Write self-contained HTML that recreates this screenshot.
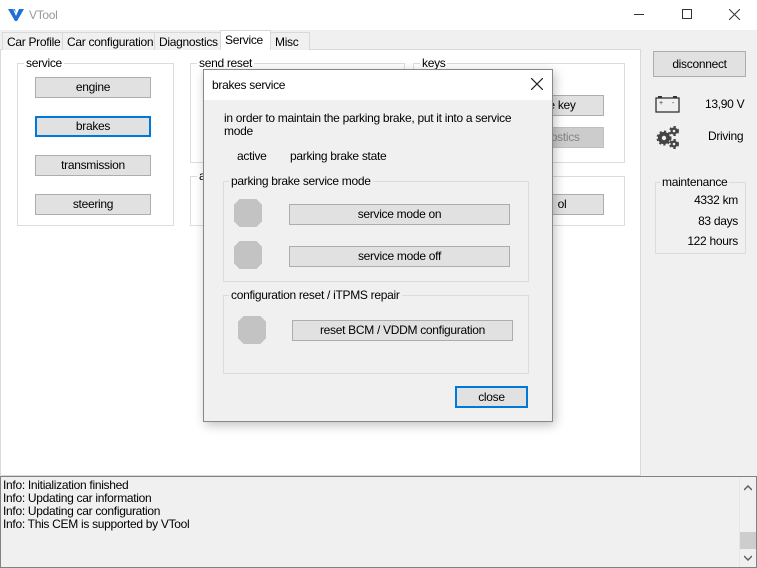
<!DOCTYPE html>
<html><head><style>
*{box-sizing:border-box;margin:0;padding:0}
body{width:757px;height:568px;background:#f0f0f0;font-family:"Liberation Sans",sans-serif;font-size:12px;color:#000;position:relative;overflow:hidden;letter-spacing:-0.3px}
.a{position:absolute;white-space:nowrap}
.btn{position:absolute;background:#e1e1e1;border:1px solid #adadad;text-align:center;line-height:19px;white-space:nowrap}
.grp{position:absolute;border:1px solid #dcdcdc}
.lg{position:absolute;top:-8px;left:6px;padding:0 2px;line-height:14px;white-space:nowrap}
.tab{position:absolute;top:32px;height:18px;border:1px solid #d9d9d9;border-bottom:none;background:#f0f0f0;line-height:18px;padding-left:4px;white-space:nowrap;overflow:hidden}
.oct{position:absolute;width:28px;height:28px;background:#c3c3c3;clip-path:polygon(20% 0,80% 0,100% 20%,100% 80%,80% 100%,20% 100%,0 80%,0 20%)}
</style></head><body>
<div class="a" style="left:0;top:0;width:757px;height:30px;background:#fff"></div>
<svg class="a" style="left:8px;top:8px" width="16" height="14" viewBox="0 0 16 14"><path d="M0 1h5l3 7 3-7h5l-7 12h-2z" fill="#1e6fd9"/><path d="M4 1h3l1 3z" fill="#4aa0ff"/></svg>
<div class="a" style="left:29px;top:8px;color:#999;font-size:12px">VTool</div>
<div class="a" style="left:634px;top:14px;width:10px;height:1px;background:#333"></div>
<div class="a" style="left:682px;top:9px;width:10px;height:10px;border:1px solid #333"></div>
<svg class="a" style="left:729px;top:9px" width="11" height="11"><path d="M0 0L11 11M11 0L0 11" stroke="#333" stroke-width="1"/></svg>

<div class="a" style="left:0;top:49px;width:641px;height:427px;background:#fff;border:1px solid #d9d9d9"></div>
<div class="tab" style="left:2px;width:61px">Car Profile</div>
<div class="tab" style="left:62px;width:93px">Car configuration</div>
<div class="tab" style="left:154px;width:67px">Diagnostics</div>
<div class="tab" style="left:220px;top:30px;height:20px;width:51px;background:#fff;line-height:18px">Service</div>
<div class="tab" style="left:270px;width:40px">Misc</div>

<div class="grp" style="left:17px;top:63px;width:157px;height:163px"><span class="lg" style="background:#fff">service</span></div>
<div class="btn" style="left:35px;top:77px;width:116px;height:21px">engine</div>
<div class="btn" style="left:35px;top:116px;width:116px;height:21px;border:2px solid #0078d7;line-height:17px">brakes</div>
<div class="btn" style="left:35px;top:155px;width:116px;height:21px">transmission</div>
<div class="btn" style="left:35px;top:194px;width:116px;height:21px">steering</div>
<div class="grp" style="left:190px;top:63px;width:215px;height:100px"><span class="lg" style="background:#fff">send reset</span></div>
<div class="grp" style="left:413px;top:63px;width:212px;height:100px"><span class="lg" style="background:#fff">keys</span></div>
<div class="grp" style="left:190px;top:176px;width:215px;height:50px"><span class="lg" style="background:#fff">a</span></div>
<div class="grp" style="left:413px;top:176px;width:212px;height:50px"></div>
<div class="btn" style="left:520px;top:95px;width:84px;height:21px">e key</div>
<div class="btn" style="left:520px;top:127px;width:84px;height:21px;background:#ccc;color:#838383;border-color:#bfbfbf">nostics</div>
<div class="btn" style="left:520px;top:194px;width:84px;height:21px">ol</div>

<div class="btn" style="left:653px;top:51px;width:93px;height:26px;line-height:24px">disconnect</div>
<svg class="a" style="left:655px;top:95px" width="25" height="18" viewBox="0 0 25 18"><rect x="1" y="3" width="23" height="14" fill="none" stroke="#333" stroke-width="1.3"/><rect x="3" y="1" width="4" height="2" fill="#333"/><rect x="18" y="1" width="4" height="2" fill="#333"/><text x="4" y="10" font-size="7" fill="#333">+</text><text x="17" y="10" font-size="7" fill="#333">-</text></svg>
<div class="a" style="left:705px;top:97px">13,90 V</div>
<svg class="a" style="left:655px;top:124px" width="26" height="26" viewBox="0 0 26 26"><g fill="#444" stroke="#444" stroke-width="3" stroke-dasharray="2 2"><circle cx="9" cy="14" r="6"/><circle cx="19" cy="7" r="3.5"/><circle cx="19" cy="20" r="3.5"/></g><g fill="#444"><circle cx="9" cy="14" r="6"/><circle cx="19" cy="7" r="3.5"/><circle cx="19" cy="20" r="3.5"/></g><g fill="#f0f0f0"><circle cx="9" cy="14" r="2.2"/><circle cx="19" cy="7" r="1.3"/><circle cx="19" cy="20" r="1.3"/></g></svg>
<div class="a" style="left:708px;top:129px">Driving</div>
<div class="grp" style="left:655px;top:182px;width:91px;height:72px"><span class="lg" style="background:#f0f0f0;left:4px">maintenance</span></div>
<div class="a" style="right:19px;top:193px">4332 km</div>
<div class="a" style="right:19px;top:214px">83 days</div>
<div class="a" style="right:19px;top:234px">122 hours</div>

<div class="a" style="left:0;top:476px;width:757px;height:92px;border:1px solid #828282;background:#f0f0f0"></div>
<div class="a" style="left:3px;top:479px;line-height:13px">Info: Initialization finished<br>Info: Updating car information<br>Info: Updating car configuration<br>Info: This CEM is supported by VTool</div>
<div class="a" style="left:739px;top:477px;width:17px;height:90px;background:#f0f0f0;border-left:1px solid #e6e6e6"></div>
<div class="a" style="left:740px;top:532px;width:16px;height:17px;background:#cdcdcd"></div>
<svg class="a" style="left:744px;top:485px" width="8" height="6"><path d="M0 5L4 1L8 5" fill="none" stroke="#606060" stroke-width="1.5"/></svg>
<svg class="a" style="left:744px;top:555px" width="8" height="6"><path d="M0 1L4 5L8 1" fill="none" stroke="#606060" stroke-width="1.5"/></svg>

<div class="a" style="left:203px;top:69px;width:350px;height:353px;background:#f0f0f0;border:1px solid #888;box-shadow:2px 3px 10px rgba(0,0,0,.25)"></div>
<div class="a" style="left:204px;top:70px;width:348px;height:30px;background:#fff"></div>
<div class="a" style="left:212px;top:78px">brakes service</div>
<svg class="a" style="left:531px;top:78px" width="12" height="12"><path d="M0 0L12 12M12 0L0 12" stroke="#222" stroke-width="1.2"/></svg>
<div class="a" style="left:224px;top:112px;line-height:13px">in order to maintain the parking brake, put it into a service<br>mode</div>
<div class="a" style="left:237px;top:149px">active</div>
<div class="a" style="left:290px;top:149px">parking brake state</div>
<div class="grp" style="left:223px;top:181px;width:306px;height:101px"><span class="lg" style="background:#f0f0f0;left:5px">parking brake service mode</span></div>
<div class="oct" style="left:234px;top:199px"></div>
<div class="btn" style="left:289px;top:204px;width:221px;height:21px">service mode on</div>
<div class="oct" style="left:234px;top:241px"></div>
<div class="btn" style="left:289px;top:246px;width:221px;height:21px">service mode off</div>
<div class="grp" style="left:223px;top:295px;width:306px;height:79px"><span class="lg" style="background:#f0f0f0;left:5px">configuration reset / iTPMS repair</span></div>
<div class="oct" style="left:238px;top:316px"></div>
<div class="btn" style="left:292px;top:320px;width:221px;height:21px">reset BCM / VDDM configuration</div>
<div class="btn" style="left:455px;top:386px;width:73px;height:22px;border:2px solid #0078d7;line-height:18px">close</div>
</body></html>
